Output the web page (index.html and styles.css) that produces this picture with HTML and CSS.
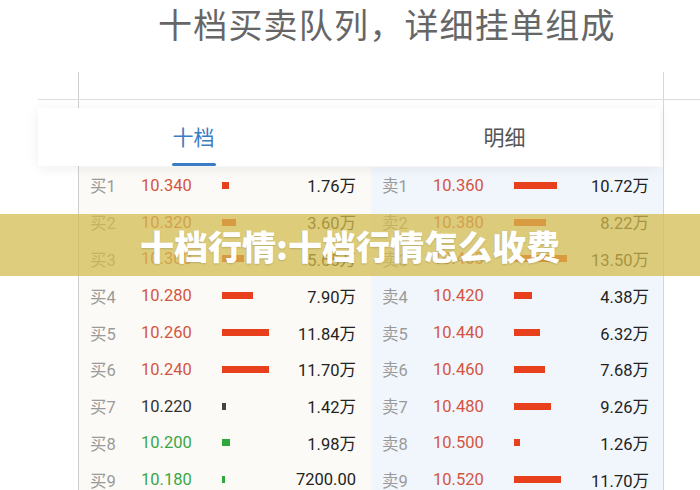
FILE: index.html
```html
<!DOCTYPE html>
<html lang="zh">
  <head>
    <meta charset="UTF-8" />
    <meta name="viewport" content="width=device-width, initial-scale=1.0" />
    <title>十档行情</title>
    <link rel="stylesheet" href="styles.css">
  </head>
  <body>
    <h1 class="title">十档买卖队列，详细挂单组成</h1>

    <div class="board">
      <div class="rule"></div>
      <div class="tabs">
        <div class="tab active">十档</div>
        <div class="tab">明细</div>
      </div>

      <div class="book">
        <!-- buy side -->
        <div class="side buy">
          <div class="row"><span class="lbl">买1</span><span class="price up">10.340</span><span class="bar"><i class="up" style="width:7px"></i></span><span class="vol">1.76万</span></div>
          <div class="row"><span class="lbl">买2</span><span class="price up">10.320</span><span class="bar"><i class="up" style="width:14px"></i></span><span class="vol">3.60万</span></div>
          <div class="row"><span class="lbl">买3</span><span class="price up">10.300</span><span class="bar"><i class="up" style="width:22px"></i></span><span class="vol">5.65万</span></div>
          <div class="row"><span class="lbl">买4</span><span class="price up">10.280</span><span class="bar"><i class="up" style="width:31px"></i></span><span class="vol">7.90万</span></div>
          <div class="row"><span class="lbl">买5</span><span class="price up">10.260</span><span class="bar"><i class="up" style="width:47px"></i></span><span class="vol">11.84万</span></div>
          <div class="row"><span class="lbl">买6</span><span class="price up">10.240</span><span class="bar"><i class="up" style="width:47px"></i></span><span class="vol">11.70万</span></div>
          <div class="row"><span class="lbl">买7</span><span class="price flat">10.220</span><span class="bar"><i class="flat" style="width:4px"></i></span><span class="vol">1.42万</span></div>
          <div class="row"><span class="lbl">买8</span><span class="price down">10.200</span><span class="bar"><i class="down" style="width:8px"></i></span><span class="vol">1.98万</span></div>
          <div class="row"><span class="lbl">买9</span><span class="price down">10.180</span><span class="bar"><i class="down" style="width:3px"></i></span><span class="vol">7200.00</span></div>
        </div>
        <!-- sell side -->
        <div class="side sell">
          <div class="row"><span class="lbl">卖1</span><span class="price up">10.360</span><span class="bar"><i class="up" style="width:43px"></i></span><span class="vol">10.72万</span></div>
          <div class="row"><span class="lbl">卖2</span><span class="price up">10.380</span><span class="bar"><i class="up" style="width:32px"></i></span><span class="vol">8.22万</span></div>
          <div class="row"><span class="lbl">卖3</span><span class="price up">10.400</span><span class="bar"><i class="up" style="width:53px"></i></span><span class="vol">13.50万</span></div>
          <div class="row"><span class="lbl">卖4</span><span class="price up">10.420</span><span class="bar"><i class="up" style="width:18px"></i></span><span class="vol">4.38万</span></div>
          <div class="row"><span class="lbl">卖5</span><span class="price up">10.440</span><span class="bar"><i class="up" style="width:26px"></i></span><span class="vol">6.32万</span></div>
          <div class="row"><span class="lbl">卖6</span><span class="price up">10.460</span><span class="bar"><i class="up" style="width:31px"></i></span><span class="vol">7.68万</span></div>
          <div class="row"><span class="lbl">卖7</span><span class="price up">10.480</span><span class="bar"><i class="up" style="width:37px"></i></span><span class="vol">9.26万</span></div>
          <div class="row"><span class="lbl">卖8</span><span class="price up">10.500</span><span class="bar"><i class="up" style="width:6px"></i></span><span class="vol">1.26万</span></div>
          <div class="row"><span class="lbl">卖9</span><span class="price up">10.520</span><span class="bar"><i class="up" style="width:47px"></i></span><span class="vol">11.70万</span></div>
        </div>
      </div>
    </div>

    <div class="banner">十档行情:十档行情怎么收费</div>
  </body>
</html>
```

FILE: styles.css
```css
html,
body {
  overflow: hidden;
}
body {
  margin: 0;
  height: 490px;
  position: relative;
  background: #fff;
  font-family: "Roboto", "Noto Sans CJK SC", sans-serif;
  color: #222;
}

/* Title */
.title {
  margin: 0;
  padding-left: 158px;
  font-family: "Noto Sans CJK SC", sans-serif;
  font-weight: 400;
  font-size: 34px;
  letter-spacing: 1.2px;
  line-height: 48px;
  color: #666;
}

/* Frame with the two vertical lines */
.board {
  box-sizing: border-box;
  width: 586px;
  margin: 24px 0 0 78px;
  padding-top: 27px;
  border-left: 1px solid #cfcfcf;
  border-right: 1px solid #d6d6d6;
}
.rule {
  height: 1px;
  margin: 0 -37px 0 -41px;
  background: #dcdcdc;
}

/* Tabs card */
.tabs {
  display: grid;
  grid-template-columns: 1fr 1fr;
  width: 622px;
  height: 58px;
  margin: 8px 0 0 -41px;
  background: #fff;
  box-shadow: 0 2px 12px rgba(0, 0, 0, 0.07);
  position: relative;
}
.tab {
  display: flex;
  align-items: center;
  justify-content: center;
  font-family: "Noto Sans CJK SC", sans-serif;
  font-size: 21px;
  color: #555;
  padding-bottom: 2px;
}
.tab.active {
  color: #3b7dc4;
  position: relative;
}
.tab.active::after {
  content: "";
  position: absolute;
  bottom: 0;
  left: 50%;
  width: 44px;
  height: 3px;
  margin-left: -22px;
  background: #3b7dc4;
  border-radius: 2px;
}

/* Order book */
.book {
  display: grid;
  grid-template-columns: 1fr 1fr;
  padding-top: 1px;
}
.side.buy {
  background: #fcfaf6;
}
.side.sell {
  background: #f1f6fc;
}
.row {
  display: grid;
  grid-template-columns: 51px 81px 1fr auto;
  align-items: center;
  height: 36.8px;
  padding: 0 15px 0 11px;
  font-size: 16.5px;
}
.sell .row {
  padding-right: 14px;
}
.lbl {
  color: #9a9a9a;
}
.price.up {
  color: #d4553f;
}
.price.flat {
  color: #333;
}
.price.down {
  color: #3aa646;
}
.bar {
  display: flex;
  align-items: center;
}
.bar i {
  display: block;
  height: 7px;
}
.bar i.up {
  background: #e8401c;
}
.bar i.flat {
  background: #444;
}
.bar i.down {
  background: #2da83a;
}
.vol {
  text-align: right;
  color: #222;
}

/* Banner over the table */
.banner {
  position: absolute;
  top: 214px;
  left: 0;
  right: 0;
  height: 62px;
  display: flex;
  align-items: center;
  justify-content: center;
  background: rgba(210, 188, 78, 0.74);
  color: #fff;
  font-family: "Noto Sans CJK SC", sans-serif;
  font-weight: 900;
  font-size: 34px;
  text-shadow: 0 1px 2px rgba(0, 0, 0, 0.15);
}
```
